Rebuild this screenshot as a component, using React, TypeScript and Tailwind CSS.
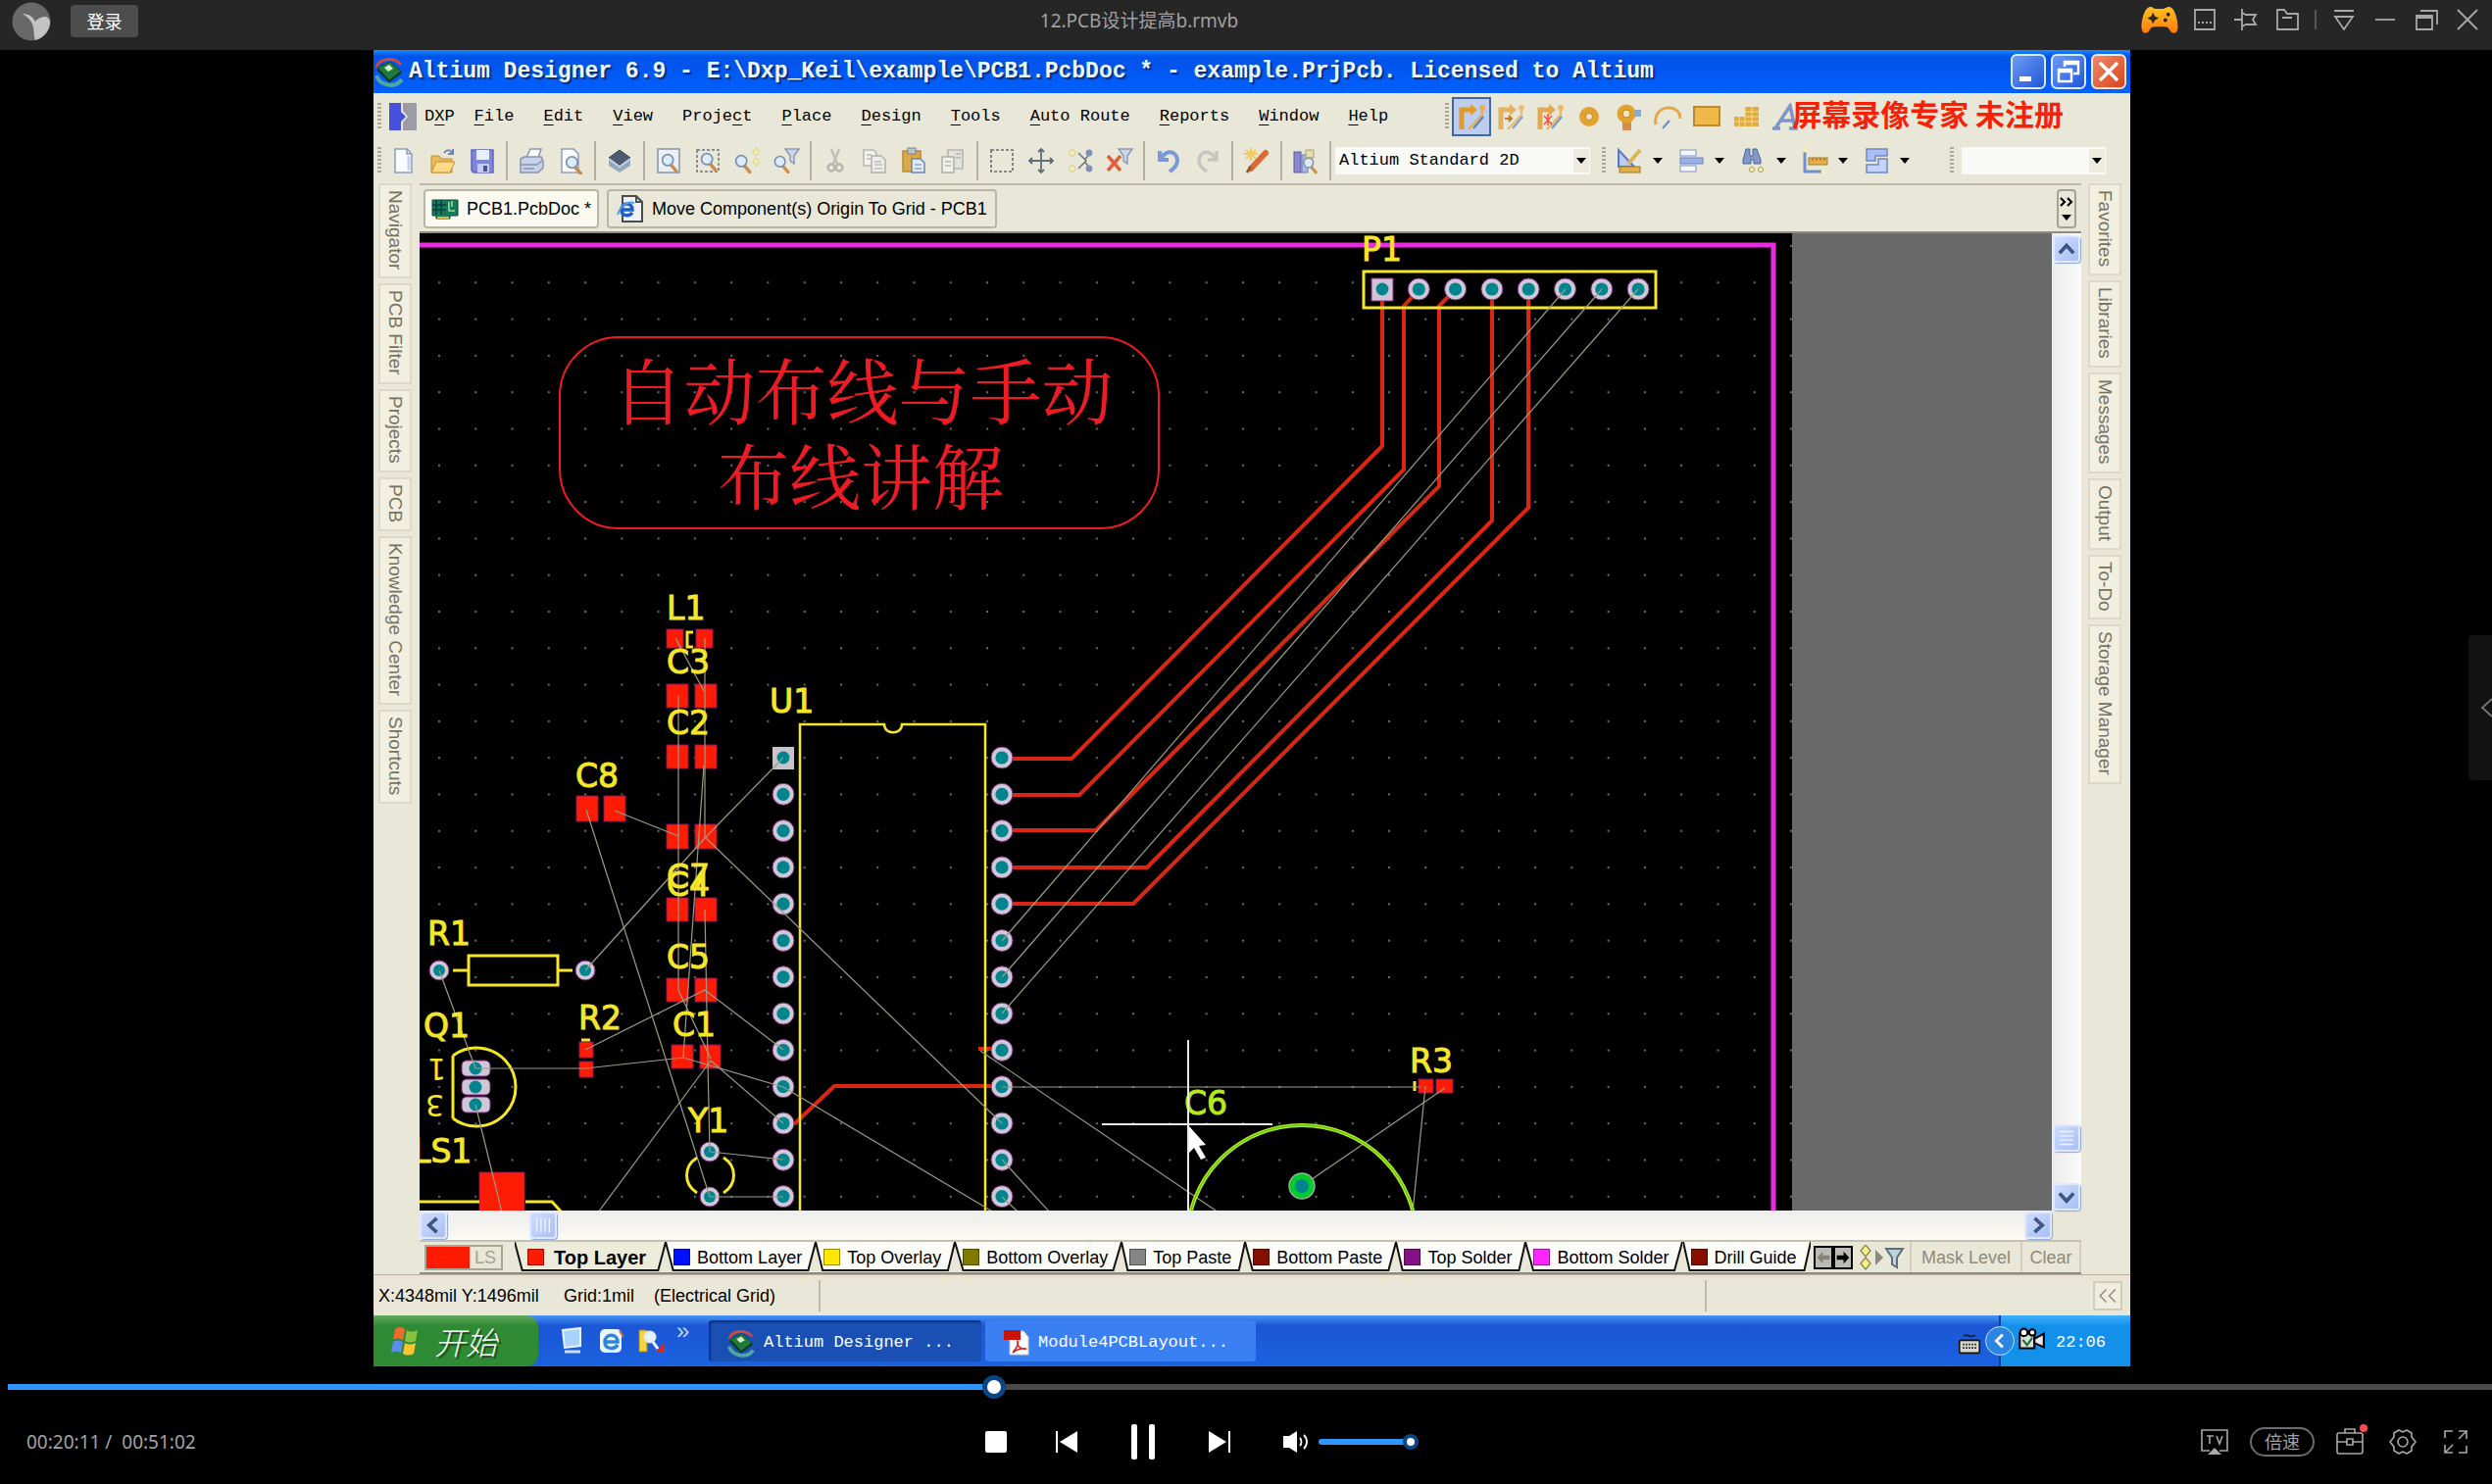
import type { ReactNode } from "react";

const menus: [string, number][] = [
  ["File", 0],
  ["Edit", 0],
  ["View", 0],
  ["Project", 5],
  ["Place", 0],
  ["Design", 0],
  ["Tools", 0],
  ["Auto Route", 0],
  ["Reports", 0],
  ["Window", 0],
  ["Help", 0],
];

const leftTabs = ["Navigator", "PCB Filter", "Projects", "PCB", "Knowledge Center", "Shortcuts"];
const rightTabs = ["Favorites", "Libraries", "Messages", "Output", "To-Do", "Storage Manager"];

const layers = [
  { name: "Top Layer", color: "#ff1a00", active: true },
  { name: "Bottom Layer", color: "#0010ff" },
  { name: "Top Overlay", color: "#ffe800" },
  { name: "Bottom Overlay", color: "#807b00" },
  { name: "Top Paste", color: "#858585" },
  { name: "Bottom Paste", color: "#851000" },
  { name: "Top Solder", color: "#851285" },
  { name: "Bottom Solder", color: "#ff25ff" },
  { name: "Drill Guide", color: "#851000" },
];

/* ---------- small drawings ---------- */

function Icon({ children, className = "size-7" }: { children: ReactNode; className?: string }) {
  return (
    <svg viewBox="0 0 28 28" className={className} fill="none" aria-hidden="true">
      {children}
    </svg>
  );
}

const page = <path d="M5 2h12l5 5v19H5z" fill="#fbfcff" stroke="#8f9db8" strokeWidth="1.5" />;

const lens = (
  <>
    <path d="M17 18l6 7" stroke="#c98d4a" strokeWidth="4" strokeLinecap="round" />
    <circle cx="13" cy="12" r="6.5" fill="#dcecfb" stroke="#7f92ad" strokeWidth="2" />
  </>
);

const newDoc = (
  <>
    {page}
    <path d="M17 2v5h5" stroke="#8f9db8" strokeWidth="1.5" />
    <path d="M19 9v15" stroke="#c3d2ee" strokeWidth="3" />
  </>
);

const openDoc = (
  <>
    <path d="M15 6c3-4 7-3 8 0m1-4v5h-5" stroke="#6c87b5" strokeWidth="2" />
    <path d="M2 9h8l2 3h11v14H2z" fill="#e9b95a" stroke="#c18f35" />
    <path d="M7 15h19l-5 11H2z" fill="#ffd987" stroke="#c18f35" />
  </>
);

const saveDoc = (
  <>
    <path d="M3 3h22v23H5l-2-2z" fill="#7f84dc" stroke="#6267bc" strokeWidth="1.5" />
    <rect x="8" y="3" width="13" height="10" fill="#e7efff" />
    <rect x="9" y="17" width="12" height="9" fill="#c5cdf0" />
    <rect x="15" y="19" width="4" height="6" fill="#4a509c" />
  </>
);

const printDoc = (
  <>
    <path d="M9 11l4-9h11l-3 9z" fill="#fff" stroke="#8795b0" strokeWidth="1.5" />
    <path d="M3 12l4-2h17l2 4v7l-5 5H3z" fill="#c6d3e8" stroke="#8794ab" strokeWidth="1.5" />
    <path d="M3 18h17l5-4M6 22h11" stroke="#8794ab" strokeWidth="1.5" />
  </>
);

const previewDoc = (
  <>
    {page}
    <g transform="translate(4 5) scale(.88)">{lens}</g>
  </>
);

const board = (
  <>
    <path d="M3 13v6l11 7 11-7v-6" fill="#93a7bf" />
    <path d="M14 3l11 8-11 8-11-8z" fill="#4f5b6e" stroke="#3a4553" />
    <path d="M3 12l11 8 11-8" stroke="#c3d3e6" strokeWidth="2" />
  </>
);

const zoomDoc = (
  <>
    <path d="M3 2h22v24H3z" fill="#e9f0f8" stroke="#8492a6" strokeWidth="1.5" />
    <g transform="translate(2 3) scale(.86)">{lens}</g>
  </>
);

const zoomArea = (
  <>
    <path d="M3 3h22v22H3z" stroke="#6a7280" strokeWidth="1.5" strokeDasharray="3 2" />
    <g transform="translate(2 2) scale(.86)">{lens}</g>
  </>
);

const zoomPoint = (
  <>
    <g transform="translate(-3 4) scale(.86)">{lens}</g>
    <path d="M23 1l4 4-4 4-3-4zM23 11l4 4-4 4-3-4z" fill="#f5f1a0" stroke="#d3cd88" />
  </>
);

const funnel = <path d="M13 2h14l-5 7v8l-4-3V9z" fill="#c9d7ea" stroke="#8d9bb1" strokeWidth="1.5" />;

const zoomFilter = (
  <>
    <g transform="translate(-3 5) scale(.82)">{lens}</g>
    {funnel}
  </>
);

const cut = (
  <>
    <path d="M10 2l6 15M18 2l-6 15" stroke="#c0c0b9" strokeWidth="2.5" />
    <circle cx="10" cy="21" r="3.5" stroke="#b6b6b0" strokeWidth="2.5" />
    <circle cx="18" cy="21" r="3.5" stroke="#b6b6b0" strokeWidth="2.5" />
  </>
);

const copy = (
  <>
    <path d="M3 3h10l3 3v13H3z" fill="#f3f3ef" stroke="#b6b6b0" strokeWidth="1.5" />
    <path d="M11 9h10l4 4v13H11z" fill="#ececea" stroke="#b0b0aa" strokeWidth="1.5" />
    <path d="M6 8h5M6 12h4M14 15h7M14 18h8M14 22h8" stroke="#bdbdb8" strokeWidth="1.3" />
  </>
);

const paste = (
  <>
    <rect x="3" y="4" width="18" height="21" fill="#dba94a" stroke="#b58a3a" strokeWidth="1.5" />
    <rect x="8" y="1" width="8" height="6" fill="#bfc5cf" stroke="#7a7f88" />
    <path d="M12 12h9l4 4v10H12z" fill="#dfe9fa" stroke="#7085ad" strokeWidth="1.5" />
    <path d="M15 18h7M15 22h7" stroke="#7085ad" />
  </>
);

const rubber = (
  <>
    <path d="M9 3h15v19H9z" fill="#e3e3de" stroke="#b4b4ae" strokeWidth="1.5" />
    <path d="M3 10h12v16H3z" fill="#f0f0ec" stroke="#b0b0aa" strokeWidth="1.5" />
    <path d="M17 7h5M17 11h5M6 15h6M6 19h6" stroke="#b5b5b0" strokeWidth="1.5" />
  </>
);

const selectArea = <path d="M3 3h22v22H3z" stroke="#666b72" strokeWidth="1.6" strokeDasharray="3 2" />;

const move = (
  <path
    d="M14 3v22M3 14h22M11 5l3-3 3 3M11 23l3 3 3-3M5 11l-3 3 3 3M23 11l3 3-3 3"
    stroke="#5f6b7b"
    strokeWidth="1.8"
  />
);

const deselect = (
  <>
    <path d="M12 6l8 8-8 8M22 9l-4 4M22 19l-4-4" stroke="#6c7480" strokeWidth="1.6" />
    <circle cx="6" cy="6" r="3.2" fill="#f2eeb0" stroke="#d3cd94" />
    <circle cx="6" cy="22" r="3.2" fill="#f2eeb0" stroke="#d3cd94" />
    <circle cx="23" cy="6" r="3.4" fill="#7c93b5" />
    <circle cx="23" cy="22" r="3.4" fill="#7c93b5" />
  </>
);

const clearFilter = (
  <>
    {funnel}
    <path d="M2 9l13 15M15 9L2 24" stroke="#e2603f" strokeWidth="3.5" />
  </>
);

const undo = <path d="M5 4v9h9M6 12c4-7 11-9 15-4s2 12-6 17" stroke="#7b98d8" strokeWidth="4" />;
const redo = <path d="M23 4v9h-9M22 12c-4-7-11-9-15-4s-2 12 6 17" stroke="#c6c6c0" strokeWidth="3.5" />;

const wand = (
  <>
    <path d="M8 1v13M1 7h14M3 3l10 9M13 3L3 12" stroke="#f0cc5c" strokeWidth="2" />
    <path d="M23 6L8 22" stroke="#dc6a35" strokeWidth="6" strokeLinecap="round" />
    <path d="M8 20l-4 6" stroke="#8c5a3a" strokeWidth="3" />
  </>
);

const browse = (
  <>
    <rect x="2" y="5" width="7" height="21" fill="#8a86cf" stroke="#5d5aa0" />
    <rect x="10" y="8" width="6" height="18" fill="#a9b9e6" stroke="#6d7db0" />
    <path d="M14 3h8v8h-8z" fill="#e6dcb0" stroke="#a89c6c" />
    <g transform="translate(7 7) scale(.75)">{lens}</g>
  </>
);

const drafting = (
  <>
    <path d="M3 3v17h16z" fill="#b9cbf5" stroke="#5877c0" strokeWidth="2" />
    <path d="M25 3L13 17" stroke="#d8b75a" strokeWidth="4" />
    <rect x="4" y="20" width="21" height="6" fill="#e2b04a" stroke="#9c7425" />
  </>
);

const alignIcon = (
  <>
    <rect x="3" y="3" width="16" height="6" fill="#f4f7ff" stroke="#8094c4" />
    <rect x="3" y="11" width="23" height="6" fill="#9ab0ea" stroke="#6b82bd" />
    <rect x="3" y="19" width="16" height="6" fill="#f4f7ff" stroke="#8094c4" />
  </>
);

const find = (
  <>
    <path d="M7 2h4v7h3V2h4l4 11v4h-7v-4h-3v4H4v-4z" fill="#8298c8" stroke="#4f6596" />
    <circle cx="13" cy="23" r="2.6" fill="#f2eeb0" stroke="#aaa35e" />
    <circle cx="22" cy="23" r="2.6" fill="#f2eeb0" stroke="#aaa35e" />
  </>
);

const dimension = (
  <>
    <path d="M4 5v20h20" stroke="#7390cf" strokeWidth="3" />
    <rect x="8" y="11" width="19" height="7" fill="#e6ad48" stroke="#a87a28" />
    <path d="M12 11v3M16 11v3M20 11v3M24 11v3" stroke="#8d6420" />
    <circle cx="5" cy="3" r="2.4" fill="#f5f1a8" />
    <circle cx="23" cy="25" r="2.4" fill="#f5f1a8" />
  </>
);

const room = (
  <>
    <path d="M4 2h21v7H13v5H4z" fill="#a9bff2" stroke="#6e88c5" strokeWidth="1.5" />
    <path d="M25 12v14H4v-8h12v-6z" fill="#c5d5fa" stroke="#6e88c5" strokeWidth="1.5" />
  </>
);

const toolGroups: [string, ReactNode][][] = [
  [["New", newDoc], ["Open", openDoc], ["Save", saveDoc]],
  [["Print", printDoc], ["Preview", previewDoc]],
  [["Layer sets", board]],
  [["Fit document", zoomDoc], ["Zoom area", zoomArea], ["Zoom selected", zoomPoint], ["Zoom filtered", zoomFilter]],
  [["Cut", cut], ["Copy", copy], ["Paste", paste], ["Rubber stamp", rubber]],
  [["Select area", selectArea], ["Move", move], ["Deselect", deselect], ["Clear filter", clearFilter]],
  [["Undo", undo], ["Redo", redo]],
  [["Cross probe", wand]],
  [["Browse", browse]],
];

const dropTools: [string, ReactNode][] = [
  ["Utilities", drafting],
  ["Align", alignIcon],
  ["Find", find],
  ["Dimension", dimension],
  ["Rooms", room],
];

const route = (
  <>
    <path d="M4 27V7h11" stroke="#e09a30" strokeWidth="5" />
    <path d="M13 1l7 6-7 6z" fill="#e09a30" />
    <circle cx="25" cy="5" r="3" fill="#e8b050" />
    <path d="M25 4v8L11 27" stroke="#e8b050" strokeWidth="2.5" />
    <path d="M26 14L16 26" stroke="#5b7fc0" strokeWidth="2" />
  </>
);

const placeTools: [string, ReactNode][] = [
  ["Route", route],
  [
    "Route pair",
    <>
      <g opacity=".7">{route}</g>
      <path d="M8 16h7m-3-3l3 3-3 3" stroke="#c07a28" strokeWidth="2" />
    </>,
  ],
  [
    "Route multiple",
    <>
      <g opacity=".8">{route}</g>
      <path d="M8 13l8 9M16 13l-8 9M12 11v12" stroke="#ee5a40" strokeWidth="1.6" />
    </>,
  ],
  [
    "Pad",
    <>
      <circle cx="14" cy="14" r="10" fill="#e3a230" />
      <circle cx="14" cy="14" r="3.5" fill="#f8eac0" stroke="#b9842a" />
    </>,
  ],
  [
    "Via",
    <>
      <path d="M15 7h12v7H15z" fill="#7fb0d8" />
      <path d="M8 18h9v10H8z" fill="#d88c4a" />
      <circle cx="12" cy="11" r="9.5" fill="#e3a230" />
      <circle cx="12" cy="11" r="4" fill="#f6e3b4" stroke="#b9842a" />
    </>,
  ],
  [
    "Arc",
    <>
      <path d="M2 22C-2 2 27-1 27 16" stroke="#e2a848" strokeWidth="3" />
      <path d="M9 26l7-8" stroke="#6c8cc4" strokeWidth="2" />
    </>,
  ],
  ["Fill", <rect x="1" y="4" width="26" height="19" fill="#f0b848" stroke="#b98a3c" strokeWidth="2" />],
  [
    "Polygon",
    <>
      <path d="M13 4h14v20H2V14h11z" fill="#e2ab3d" />
      <path d="M2 19h25M13 9h14M13 14h14M7 14v10M13 4v20M20 4v20" stroke="#f7dc98" />
    </>,
  ],
];

function Altium({ className = "size-8" }: { className?: string }) {
  return (
    <svg viewBox="0 0 32 32" className={className} fill="none" aria-hidden="true">
      <path d="M3 12C5 3 20 0 28 9" stroke="#c94a45" strokeWidth="3" />
      <path d="M3 20c3 10 19 14 26 4" stroke="#4fa8a0" strokeWidth="4" />
      <path d="M4 12l13-6 11 10-12 9z" fill="#1f7a3c" stroke="#0c4a22" />
      <path d="M11 12l5-3 4 4-5 3z" fill="#d6efc5" />
      <path d="M4 14l12 12 12-9" stroke="#0a3a1c" strokeWidth="2" />
    </svg>
  );
}

function Caret() {
  return (
    <svg viewBox="0 0 10 6" className="h-[6px] w-[10px]" aria-hidden="true">
      <path d="M0 0h10L5 6z" fill="#000" />
    </svg>
  );
}

function Grip() {
  return <span className="h-7 w-1 shrink-0 bg-[repeating-linear-gradient(#aaa799_0_2px,transparent_2px_4px)]" />;
}

/* ---------- PCB canvas ---------- */

const pitch = 37.3;
const rows = Array.from({ length: 13 }, (_, i) => 773 + i * pitch);
const cols = Array.from({ length: 8 }, (_, i) => 1410 + i * pitch);

const traces = [
  "M1410 300V455L1093 774H1022",
  "M1447 296L1432 312V479L1101 811H1022",
  "M1484 296L1468 312V496L1118 847H1022",
  "M1522 300V531L1170 885H1022",
  "M1559 300V518L1156 922H1022",
  "M799 1146H811L851 1108H1022",
  "M998 1070H1022",
];

const rats = [
  "M1597 295L1022 960",
  "M1634 295L1022 997",
  "M1671 295L1022 1034",
  "M689 651L718 705",
  "M719 651V854",
  "M692 710V1010L725 1080",
  "M718 781L697 1078",
  "M719 928L722 1084 724 1175",
  "M799 773L719 855 597 990",
  "M719 854L1022 1146",
  "M598 826L724 1221",
  "M627 827L692 853",
  "M448 990L485 1090H597L697 1079 799 1109",
  "M597 1071L719 1010 799 1071",
  "M725 1082L799 1146",
  "M725 1082L610 1237",
  "M799 1109L1014 1237",
  "M724 1175L799 1183",
  "M724 1221H799",
  "M485 1127L512 1237",
  "M1000 1072L1243 1237",
  "M1022 1109H1449",
  "M1022 1183L1071 1237",
  "M1022 1221L1039 1237",
  "M1454 1108L1441 1237",
  "M1474 1110L1328 1210",
];

const smds = [
  [680, 642, 17, 19],
  [710, 642, 17, 19],
  [680, 698, 22, 24],
  [709, 698, 22, 24],
  [680, 760, 22, 24],
  [709, 760, 22, 24],
  [680, 841, 22, 25],
  [709, 841, 22, 25],
  [680, 916, 22, 24],
  [709, 916, 22, 24],
  [680, 998, 22, 24],
  [709, 998, 22, 24],
  [685, 1066, 22, 24],
  [714, 1066, 21, 24],
  [588, 812, 22, 26],
  [616, 812, 22, 26],
  [591, 1063, 14, 16],
  [591, 1083, 14, 16],
  [489, 1196, 46, 42],
  [1447, 1101, 15, 14],
  [1465, 1101, 17, 14],
];

const labels: [string, number, number][] = [
  ["P1", 1389, 266],
  ["L1", 680, 632],
  ["C3", 680, 687],
  ["C2", 680, 749],
  ["U1", 785, 727],
  ["C8", 587, 803],
  ["C7", 680, 906],
  ["C4", 680, 914],
  ["C5", 680, 988],
  ["C1", 686, 1057],
  ["R1", 436, 964],
  ["R2", 590, 1050],
  ["Q1", 432, 1058],
  ["LS1", 421, 1186],
  ["Y1", 702, 1155],
  ["R3", 1438, 1094],
];

function Pad({ x, y, r = 11 }: { x: number; y: number; r?: number }) {
  return (
    <>
      <circle cx={x} cy={y} r={r} fill="#cfc9d6" stroke="#7a2a86" strokeWidth="1" />
      <circle cx={x} cy={y} r={r * 0.6} fill="#00858f" />
    </>
  );
}

function Board() {
  return (
    <svg
      viewBox="428 238 1665 998"
      preserveAspectRatio="xMinYMin slice"
      className="block h-full min-w-0 flex-1 bg-[#696969]"
      role="img"
      aria-label="PCB1.PcbDoc"
    >
      <defs>
        <pattern id="grid" x="447" y="250" width="37.27" height="37.3" patternUnits="userSpaceOnUse">
          <rect width="2" height="2" fill="#6c6c6c" />
        </pattern>
      </defs>
      <rect x="428" y="238" width="1400" height="1000" fill="#000" />
      <rect x="428" y="238" width="1400" height="1000" fill="url(#grid)" />
      <path d="M420 250H1809V1240" fill="none" stroke="#ec2ae0" strokeWidth="5" />

      <g fill="#ff1c04" stroke="#8c1460" strokeWidth="1">
        {smds.map(([x, y, w, h], i) => (
          <rect key={i} x={x} y={y} width={w} height={h} />
        ))}
      </g>

      <g fill="none" stroke="#dc2614" strokeWidth="4" strokeLinejoin="round">
        {traces.map((d) => (
          <path key={d} d={d} />
        ))}
      </g>

      {/* component outlines */}
      <g fill="none" stroke="#f5e62a" strokeWidth="3">
        <rect x="1391" y="277" width="298" height="37" />
        <path d="M816 1240V739H902C902 750 920 750 920 739H1005V1240" strokeWidth="2.5" />
        <rect x="478" y="975" width="91" height="30" />
        <path d="M462 990H478M569 990H584" />
        <path d="M462 1077V1141M462 1077A40 40 0 1 1 462 1141" />
        <path d="M711 1181C697 1190 697 1208 711 1217M738 1181C752 1190 752 1208 738 1217" />
        <path d="M428 1226H489M536 1226H563L574 1238" />
        <path d="M707 645H701V660H707" />
        <path d="M593 1061H602M1443 1103V1113" />
      </g>

      {rows.map((y, i) => (
        <g key={y}>
          {i === 0 ? (
            <>
              <rect x="788" y="762" width="22" height="23" fill="#c6c3cc" />
              <circle cx="799" cy="773" r="6.4" fill="#00858f" />
            </>
          ) : (
            <Pad x={799} y={y} />
          )}
          <Pad x={1022} y={y} />
        </g>
      ))}
      <rect x="1399" y="284" width="22" height="23" fill="#d0c4d4" stroke="#8a2a90" />
      <circle cx="1410" cy="295" r="6.4" fill="#00858f" />
      {cols.slice(1).map((x) => (
        <Pad key={x} x={x} y={295} />
      ))}
      <Pad x={448} y={990} r={10} />
      <Pad x={597} y={990} r={10} />
      <Pad x={724} y={1175} r={10} />
      <Pad x={724} y={1221} r={10} />
      {[1090, 1109, 1127].map((y) => (
        <g key={y}>
          <rect x="471" y={y - 8} width="29" height="16" rx="5" fill="#cfc6d6" stroke="#8a2a90" />
          <circle cx="485" cy={y} r="6.5" fill="#00858f" />
        </g>
      ))}

      <g fill="none" stroke="#9c9c84" strokeWidth="1.2">
        {rats.map((d) => (
          <path key={d} d={d} />
        ))}
      </g>

      <g fill="#f5e62a" stroke="#f5e62a" strokeWidth="1" fontFamily="'DejaVu Sans', sans-serif" fontSize="33">
        {labels.map(([text, x, y]) => (
          <text key={text} x={x} y={y}>
            {text}
          </text>
        ))}
        <g fontSize="30" strokeWidth="0">
          <text x="-455" y="-1080" transform="rotate(180)">
            1
          </text>
          <text x="-453" y="-1117" transform="rotate(180)">
            3
          </text>
        </g>
        <text x="1208" y="1137" fill="#b6e81c" stroke="#b6e81c">
          C6
        </text>
      </g>

      <circle cx="1328" cy="1265" r="117" fill="none" stroke="#b8e824" strokeWidth="4" />
      <circle cx="1328" cy="1265" r="117" fill="none" stroke="#5ccc14" strokeWidth="1.4" />
      <circle cx="1328" cy="1210" r="13" fill="#00cc2c" stroke="#9fb09f" strokeWidth="1.4" />
      <circle cx="1328" cy="1210" r="7" fill="#00858f" />

      {/* crosshair and pointer */}
      <path d="M1212 1061V1237M1124 1147H1298" stroke="#e8e8e8" strokeWidth="2" />
      <path d="M1213 1149V1176L1218 1171 1225 1183 1230 1181 1223 1169 1230 1168Z" fill="#fff" />

      <rect x="571" y="344" width="611" height="195" rx="60" fill="none" stroke="#ed1c24" strokeWidth="2" />
      <g
        fill="#ed1c24"
        fontFamily="'FangSong', 'Noto Serif CJK SC', 'Noto Sans CJK SC', serif"
        fontSize="73"
        textAnchor="middle"
      >
        <text x="880" y="427">
          自动布线与手动
        </text>
        <text x="878" y="514">
          布线讲解
        </text>
      </g>
    </svg>
  );
}

/* ---------- editor window ---------- */

function TitleBar() {
  const box =
    "flex size-9 items-center justify-center rounded-md border-2 border-[#dfeaff] bg-linear-to-br from-[#6d9bf5] to-[#1f55d8]";
  return (
    <div className="flex h-11 shrink-0 items-center bg-linear-to-b from-[#1e8bff] via-[#0352e8] via-15% to-[#0060ff] pr-1">
      <Altium className="size-8" />
      <h1 className="ml-1 min-w-0 flex-1 overflow-hidden font-['Liberation_Mono',monospace] text-[23px] font-bold whitespace-nowrap text-[#eefaff] [text-shadow:2px_2px_1px_#0a2d80]">
        Altium Designer 6.9 - E:\Dxp_Keil\example\PCB1.PcbDoc * - example.PrjPcb. Licensed to Altium
      </h1>
      <div className="flex gap-[5px]">
        <button aria-label="Minimize window" className={box}>
          <Icon>
            <path d="M5 19h12v5H5z" fill="#fff" />
          </Icon>
        </button>
        <button aria-label="Restore window" className={box}>
          <Icon>
            <path d="M10 9V4h14v12h-5M10 6h14" stroke="#fff" strokeWidth="2.5" />
            <path d="M4 12h13v12H4zM4 14h13" stroke="#fff" strokeWidth="2.5" />
          </Icon>
        </button>
        <button
          aria-label="Close window"
          className="flex size-9 items-center justify-center rounded-md border-2 border-[#ffe6dc] bg-linear-to-br from-[#ee8a68] to-[#d8400f]"
        >
          <Icon>
            <path d="M5 5l18 18M23 5L5 23" stroke="#fff" strokeWidth="3.5" />
          </Icon>
        </button>
      </div>
    </div>
  );
}

function MenuBar() {
  return (
    <div className="relative flex h-[45px] shrink-0 items-center pt-[2px] pl-1 font-['Liberation_Mono',monospace] text-[17px]">
      <Grip />
      <svg viewBox="0 0 28 28" className="ml-2 h-7 w-7" aria-hidden="true">
        <path d="M0 0h12v9l5 5-5 5v9H0z" fill="#4550dc" />
        <path d="M14 0h14v28H14v-8l5-6-5-6z" fill="#9c9ca4" />
      </svg>
      <button className="ml-2">
        D<u className="underline-offset-4">X</u>P
      </button>
      <nav className="ml-5 flex gap-[30px]">
        {menus.map(([name, at]) => (
          <button key={name} className="whitespace-pre">
            {name.slice(0, at)}
            <u className="underline-offset-4">{name[at]}</u>
            {name.slice(at + 1)}
          </button>
        ))}
      </nav>
      <div className="ml-[58px] flex items-center">
        <Grip />
        {placeTools.map(([name, icon], i) => (
          <button
            key={name}
            aria-label={name}
            className={
              i === 0
                ? "ml-[3px] flex h-10 w-10 items-center justify-center border-2 border-[#3f67ae] bg-[#bccdee]"
                : "flex h-10 w-10 items-center justify-center"
            }
          >
            <Icon>{icon}</Icon>
          </button>
        ))}
        <button aria-label="Place string" className="flex h-10 w-10 items-center justify-center">
          <Icon>
            <path d="M1 26h8M4 26L19 3l5 23M9 18h12M18 26h9" stroke="#7f96c4" strokeWidth="3.5" />
          </Icon>
        </button>
      </div>
      <p className="absolute top-0 right-[68px] font-['Noto_Sans_CJK_SC',sans-serif] text-[30px] leading-[40px] font-bold whitespace-pre text-[#f52208]">
        屏幕录像专家 未注册
      </p>
    </div>
  );
}

function ToolBar() {
  return (
    <div className="flex h-[47px] shrink-0 items-center pl-1">
      <Grip />
      <div className="ml-[3px] flex items-center">
        {toolGroups.map((group, i) => (
          <div key={i} className="flex items-center">
            {group.map(([name, icon]) => (
              <button key={name} aria-label={name} className="flex h-10 w-10 items-center justify-center">
                <Icon>{icon}</Icon>
              </button>
            ))}
            <span className="mx-1 h-10 w-[2px] bg-[#b5b2a2]" />
          </div>
        ))}
      </div>
      <div className="relative w-[260px]">
        <select
          aria-label="View configuration"
          className="h-7 w-full appearance-none bg-[#f9f9f7] pl-1 font-['Liberation_Mono',monospace] text-[17px]"
        >
          <option>Altium Standard 2D</option>
        </select>
        <span className="pointer-events-none absolute inset-y-[2px] right-[1px] flex w-4 items-center justify-center bg-[#ecebdd]">
          <Caret />
        </span>
      </div>
      <span className="ml-3 flex items-center">
        <Grip />
      </span>
      <div className="ml-1 flex">
        {dropTools.map(([name, icon]) => (
          <button key={name} aria-label={name} className="flex h-10 w-[63px] items-center gap-[10px] pl-[6px]">
            <Icon>{icon}</Icon>
            <Caret />
          </button>
        ))}
      </div>
      <span className="ml-8 flex">
        <Grip />
      </span>
      <div className="relative mr-[25px] ml-2 min-w-0 flex-1">
        <select aria-label="Filter" className="h-7 w-full appearance-none bg-[#f9f9f7]" />
        <span className="pointer-events-none absolute inset-y-[2px] right-[1px] flex w-4 items-center justify-center bg-[#ecebdd]">
          <Caret />
        </span>
      </div>
    </div>
  );
}

function SideTabs({ tabs, className }: { tabs: string[]; className: string }) {
  return (
    <div className={`flex shrink-0 flex-col gap-[5px] ${className}`}>
      {tabs.map((tab) => (
        <button
          key={tab}
          className="flex w-[34px] items-center justify-center border-2 border-[#dcd9c8] bg-[#f1efe0] pt-[5px] pb-[7px] text-[19px] leading-6 text-[#77725f] [writing-mode:vertical-rl]"
        >
          {tab}
        </button>
      ))}
    </div>
  );
}

function ScrollButton({ label, d, thumb = false }: { label: string; d: string; thumb?: boolean }) {
  return (
    <button
      aria-label={label}
      className="flex size-7 shrink-0 items-center justify-center rounded-sm border-2 border-[#dfe8fd] bg-linear-to-br from-[#cfdcff] to-[#a9c0f5] shadow-[1px_1px_1px_#8ba6d8]"
    >
      <Icon className="size-5">
        <path d={d} stroke={thumb ? "#eef3ff" : "#3d567f"} strokeWidth={thumb ? 2 : 5} />
      </Icon>
    </button>
  );
}

function LayerTabs() {
  return (
    <div className="flex h-[35px] shrink-0 items-center border-t-2 border-b-2 border-t-[#c4c1b0] border-b-[#8f8c7e] text-lg leading-6">
      <button className="ml-[5px] flex h-[26px] w-20 items-center border-2 border-[#aaa797] text-[#a5a292]">
        <span className="h-full w-11 bg-[#ff1a00]" />
        <span className="flex-1 text-center">LS</span>
      </button>
      <div className="ml-3 flex h-full min-w-0 flex-1 overflow-hidden">
        {layers.map(({ name, color, active }) => (
          <button
            key={name}
            className={
              active
                ? "relative flex h-full shrink-0 items-center gap-[10px] pr-5 pl-[13px] text-xl font-bold"
                : "relative flex h-full shrink-0 items-center gap-[7px] pr-[14px] pl-2"
            }
          >
            <svg viewBox="0 0 100 32" preserveAspectRatio="none" className="absolute inset-0 h-full w-full" aria-hidden="true">
              <path
                d="M0 0L5 30H95L100 0"
                fill={active ? "#ecebdc" : "#fbfbf8"}
                stroke="#111"
                strokeWidth="2"
                vectorEffect="non-scaling-stroke"
              />
            </svg>
            <span className="relative size-[17px] border border-black/40" style={{ backgroundColor: color }} />
            <span className="relative whitespace-nowrap">{name}</span>
          </button>
        ))}
      </div>
      <div className="flex w-10 shrink-0">
        {["Scroll tabs left", "Scroll tabs right"].map((label, i) => (
          <button key={label} aria-label={label} className="flex h-6 w-5 items-center justify-center border-2 border-black bg-[#bdbcb4]">
            <Icon className="size-4">
              {i === 0 ? (
                <path d="M13 3L3 14l10 11v-7h12v-8H13z" fill="#85847c" />
              ) : (
                <path d="M15 3l10 11-10 11v-7H3v-8h12z" fill="#000" />
              )}
            </Icon>
          </button>
        ))}
      </div>
      <button aria-label="Mask filter" className="flex h-full w-[60px] shrink-0 items-center justify-center border-r-2 border-[#d2cfbe]">
        <svg viewBox="0 0 50 26" className="h-[26px] w-[50px]" aria-hidden="true">
          <path d="M9 0l5 6-5 6-5-6zM9 13l5 6-5 6-5-6z" fill="#f8f28c" stroke="#8c874a" strokeWidth="1.3" />
          <path d="M19 5l8 8-8 8z" fill="#8d8a80" />
          <path d="M30 4h17l-6 9v10l-5-3v-7z" fill="#bcd2dc" stroke="#5d6f78" strokeWidth="2" />
        </svg>
      </button>
      <button className="h-full w-[113px] shrink-0 border-r-2 border-[#d2cfbe] text-[#8e8a7c]">Mask Level</button>
      <button className="h-full w-[60px] shrink-0 border-r-2 border-[#d2cfbe] text-[#8e8a7c]">Clear</button>
    </div>
  );
}

function Workspace() {
  return (
    <div className="flex min-h-0 flex-1">
      <SideTabs tabs={leftTabs} className="w-[47px] pl-[5px]" />
      <div className="flex min-w-0 flex-1 flex-col">
        <div className="flex h-[51px] shrink-0 items-center border-t-2 border-b-2 border-t-[#bdbaab] border-b-[#8f8c7e] pl-1 text-lg">
          <button className="flex h-10 items-center gap-2 rounded-sm border-2 border-[#b9b6a7] bg-[#fbfaf0] px-[6px]">
            <svg viewBox="0 0 28 22" className="h-[22px] w-7" aria-hidden="true">
              <path d="M1 2h26v16h-8v3H5v-3H1z" fill="#167a56" stroke="#0b4a3a" />
              <path d="M5 2v15M10 2v15M1 7h14M1 12h14" stroke="#0a3e44" strokeWidth="1.6" />
              <path d="M18 4v9h6M21 3v6" stroke="#8fe0a4" strokeWidth="1.6" fill="none" />
              <path d="M6 20h12" stroke="#d8b742" strokeWidth="2" />
            </svg>
            PCB1.PcbDoc *
          </button>
          <button className="ml-2 flex h-10 items-center gap-2 rounded-sm border-2 border-[#b9b6a7] px-2">
            <Icon className="size-[28px]">
              <path d="M6 1h14l6 6v20H6z" fill="#eef1f5" stroke="#4c4c4c" strokeWidth="2" />
              <path d="M20 1v6h6" stroke="#4c4c4c" strokeWidth="2" />
              <path d="M4 15h12c0-8-11-8-11 0 0 7 8 7 11 3" stroke="#1d5fc4" strokeWidth="3.5" />
              <path d="M1 20C4 10 12 6 18 8" stroke="#5a9be8" strokeWidth="2" />
            </Icon>
            Move Component(s) Origin To Grid - PCB1
          </button>
          <button
            aria-label="More documents"
            className="mr-[5px] ml-auto flex h-10 w-5 flex-col items-center justify-center gap-2 rounded-sm border-2 border-[#a5a293]"
          >
            <svg viewBox="0 0 14 10" className="h-[10px] w-[14px]" fill="none" aria-hidden="true">
              <path d="M1 1l4 4-4 4M8 1l4 4-4 4" stroke="#000" strokeWidth="2.2" />
            </svg>
            <Caret />
          </button>
        </div>
        <div className="flex min-h-0 flex-1">
          <Board />
          <div className="flex w-[30px] shrink-0 flex-col items-center bg-linear-to-r from-[#ececec] to-[#fafafa] pt-[2px]">
            <ScrollButton label="Scroll up" d="M4 20l10-11 10 11" />
            <div className="flex-1" />
            <ScrollButton thumb label="Vertical thumb" d="M4 5h20M4 11h20M4 17h20M4 23h20" />
            <div className="h-8" />
            <ScrollButton label="Scroll down" d="M4 9l10 11L24 9" />
          </div>
        </div>
        <div className="mr-[30px] flex h-[30px] shrink-0 items-center bg-linear-to-b from-[#ededed] to-[#fbfaf4]">
          <ScrollButton label="Scroll left" d="M19 4L8 14l11 10" />
          <div className="w-[84px]" />
          <ScrollButton thumb label="Horizontal thumb" d="M5 4v20M11 4v20M17 4v20M23 4v20" />
          <div className="flex-1" />
          <ScrollButton label="Scroll right" d="M9 4l11 10L9 24" />
        </div>
        <LayerTabs />
      </div>
      <SideTabs tabs={rightTabs} className="w-[50px] pl-[7px]" />
    </div>
  );
}

function StatusBar() {
  return (
    <div className="flex h-[42px] shrink-0 items-center border-t border-[#b4b1a2] bg-linear-to-b from-[#ece2d4] to-[#e9e8d8] to-30% pl-[5px] text-lg">
      <span className="w-[189px] whitespace-nowrap">X:4348mil Y:1496mil</span>
      <span className="w-[92px]">Grid:1mil</span>
      <span className="w-[168px]">(Electrical Grid)</span>
      <span className="h-8 w-[2px] bg-[#bebbaa]" />
      <span className="mr-[394px] ml-auto h-8 w-[2px] bg-[#bebbaa]" />
      <button
        aria-label="Hide panels"
        className="mr-2 flex h-[30px] w-[30px] items-center justify-center border-2 border-[#cfccba] bg-[#efeddd]"
      >
        <Icon className="size-5">
          <path d="M12 5L3 14l9 9M25 5l-9 9 9 9" stroke="#8e8a7c" strokeWidth="2" />
        </Icon>
      </button>
    </div>
  );
}

function TaskBar() {
  return (
    <div className="flex h-[52px] shrink-0 items-center bg-linear-to-b from-[#4a95f5] via-[#1b56d6] via-20% to-[#1a62e0]">
      <button className="flex h-full w-[168px] items-center gap-3 rounded-r-xl bg-linear-to-b from-[#62ab5e] via-[#2f8a34] via-20% to-[#2f8a34] pl-4 font-['Noto_Sans_CJK_SC',sans-serif] text-[32px] leading-9 font-light text-white italic [text-shadow:2px_2px_1px_#164a18]">
        <svg viewBox="0 0 34 32" className="h-8 w-[34px]" aria-hidden="true">
          <path d="M6 4c4-3 7-2 10 0l-2 11c-3-2-6-2-10 0z" fill="#f06a2c" />
          <path d="M18 5c4 2 7 2 11 0l-2 11c-4 2-7 2-11 0z" fill="#86c440" />
          <path d="M4 17c4-2 7-2 10 0l-2 11c-3-2-6-2-10 0z" fill="#5b8cf0" />
          <path d="M16 18c4 2 7 2 11 0l-2 11c-4 2-7 2-11 0z" fill="#fac42c" />
        </svg>
        开始
      </button>
      <div className="flex items-center gap-2 pl-[21px]">
        <button aria-label="Desktop" className="w-8">
          <Icon>
            <path d="M4 3l18-2v18L6 21z" fill="#a9d3fb" stroke="#e9f4ff" strokeWidth="2" />
            <path d="M6 25h16" stroke="#cfd9e8" strokeWidth="3" />
          </Icon>
        </button>
        <button aria-label="Browser" className="w-8">
          <Icon>
            <rect x="2" y="2" width="22" height="24" rx="5" fill="#e8f6ff" />
            <path d="M8 15h12c0-9-13-9-13 0 0 8 10 8 13 3" stroke="#2f86d8" strokeWidth="3.5" />
            <path d="M22 4l4 6" stroke="#d86a3a" strokeWidth="2" />
          </Icon>
        </button>
        <button aria-label="Viewer" className="w-8">
          <Icon>
            <path d="M2 3h8v22H2z" fill="#f4d43c" stroke="#a3821a" />
            <path d="M6 26h12l10-11v11z" fill="#d82a1e" />
            <circle cx="13" cy="10" r="5.5" fill="#dff0ff" stroke="#e9e9e9" strokeWidth="2" />
            <path d="M16 15l5 7" stroke="#fff" strokeWidth="3" />
          </Icon>
        </button>
      </div>
      <span className="mb-5 w-[41px] pl-2 text-2xl leading-6 text-[#bcd6ff]">»</span>
      <div className="flex gap-1 font-['Liberation_Mono',monospace] text-[17px] text-white">
        <button className="flex h-[42px] w-[278px] items-center gap-2 rounded-sm bg-[#1a4fb4] pt-1 pl-[18px] shadow-[inset_2px_2px_2px_#0d3283]">
          <Altium className="size-[30px]" />
          Altium Designer ...
        </button>
        <button className="flex h-[42px] w-[276px] items-center gap-2 rounded-sm bg-[#3b80f2] pt-1 pl-[18px]">
          <Icon className="size-[28px]">
            <path d="M7 2h14l5 6v18H7z" fill="#fff" stroke="#c9c9c9" />
            <path d="M1 1h17v10H1z" fill="#c8140f" />
            <path d="M10 24c5-6 6-10 5-12-1 6 4 9 9 8-6-1-10 1-14 4z" stroke="#d8241c" strokeWidth="1.6" />
          </Icon>
          Module4PCBLayout...
        </button>
      </div>
      <button aria-label="Keyboard" className="mt-1 mr-[18px] ml-auto">
        <Icon className="size-6">
          <path d="M7 6c4-4 6 3 14-1" stroke="#0c1d44" strokeWidth="2" />
          <rect x="2" y="11" width="24" height="15" rx="2" fill="#d8d8d2" stroke="#111" strokeWidth="2" />
          <path d="M6 16h17M6 20h17" stroke="#222" strokeWidth="2" strokeDasharray="2 1.5" />
        </Icon>
      </button>
      <div className="relative flex h-full w-[134px] items-center border-l-2 border-[#0b3f9c] bg-linear-to-b from-[#3fb2fb] via-[#1290ea] via-20% to-[#1290ea] pl-4 font-['Liberation_Mono',monospace] text-[17px] text-white">
        <button
          aria-label="Show tray"
          className="absolute -left-4 flex size-[30px] items-center justify-center rounded-full border border-[#bfe0ff] bg-[#2a86e2]"
        >
          <Icon className="size-5">
            <path d="M18 5L9 14l9 9" stroke="#fff" strokeWidth="4" />
          </Icon>
        </button>
        <Icon className="size-[30px]">
          <path d="M3 7h14v14H3z" fill="#d9e0d9" stroke="#000" strokeWidth="2" />
          <path d="M17 12l9-5v13l-9-4z" fill="#e8e8e8" stroke="#000" strokeWidth="2" />
          <circle cx="7" cy="6" r="3.5" fill="#fff" stroke="#000" strokeWidth="2" />
          <circle cx="15" cy="6" r="3" fill="#fff" stroke="#000" strokeWidth="2" />
          <path d="M6 13l4 5 5-7" stroke="#1e6e3a" strokeWidth="2" />
        </Icon>
        <span className="ml-[10px] pt-1">22:06</span>
      </div>
    </div>
  );
}

/* ---------- player chrome ---------- */

const windowButtons: [string, ReactNode][] = [
  ["Mini mode", <path d="M4 4h20v20H4zM7 17h2m2 0h2m2 0h2m2 0h2" />],
  ["Pin", <path d="M2 14h8M10 3v22M10 7l4 2h10l-3 5 3 5H14l-4 2" />],
  ["Playlist", <path d="M4 24V4h7l3 4h11v16zM9 12h10" />],
];

const systemButtons: [string, ReactNode][] = [
  ["Menu", <path d="M4 5h20M5 11h18l-9 13z" />],
  ["Minimize", <path d="M4 14h20" />],
  ["Restore", <path d="M4 10h16v14H4zM4 12h16M8 5h17v14" />],
  ["Close", <path d="M4 4l20 20M24 4L4 24" />],
];

function ChromeButton({ label, children }: { label: string; children: ReactNode }) {
  return (
    <button aria-label={label} className="flex h-10 w-[42px] items-center justify-center">
      <svg viewBox="0 0 28 28" className="size-[28px]" fill="none" stroke="#a8a8a8" strokeWidth="1.8" aria-hidden="true">
        {children}
      </svg>
    </button>
  );
}

function PlayerHeader() {
  return (
    <header className="flex h-[51px] shrink-0 items-start bg-[#262626] pl-3">
      <svg viewBox="0 0 40 40" className="mt-[2px] size-10" aria-hidden="true">
        <circle cx="20" cy="20" r="19.5" fill="#686868" />
        <path d="M11 12c5 0 10 2 13 8 2-3 5-4 9-5 4 0 6 2 6 7-1 8-7 15-15 17-3-8 2-18-13-27z" fill="#c3c3c3" />
      </svg>
      <button className="mt-[5px] ml-5 h-[33px] w-[69px] rounded-sm bg-[#4d4d4d] text-lg leading-8 text-white">登录</button>
      <p className="min-w-0 flex-1 text-center text-[19px] leading-[43px] whitespace-nowrap text-[#a0a0a0]">
        12.PCB设计提高b.rmvb
      </p>
      <div className="mr-1 flex items-center">
        <button aria-label="Games" className="mr-[5px]">
          <svg viewBox="0 0 40 30" className="h-[29px] w-10" aria-hidden="true">
            <defs>
              <linearGradient id="pad" x1="0" y1="0" x2="0" y2="1">
                <stop offset="0" stopColor="#ffc11e" />
                <stop offset="1" stopColor="#ff7a0e" />
              </linearGradient>
            </defs>
            <path
              d="M10 1c3 0 3 2 6 2h8c3 0 3-2 6-2 6 0 10 16 9 23-1 6-5 6-8 2-2-3-3-4-6-4H15c-3 0-4 1-6 4-3 4-7 4-8-2C0 17 4 1 10 1z"
              fill="url(#pad)"
            />
            <path d="M13 7l2 4 4 2-4 2-2 4-2-4-4-2 4-2z" fill="#262626" />
            <circle cx="29" cy="9" r="2" fill="#262626" />
            <circle cx="26" cy="15" r="2" fill="#262626" />
          </svg>
        </button>
        {windowButtons.map(([label, art]) => (
          <ChromeButton key={label} label={label}>
            {art}
          </ChromeButton>
        ))}
        <span className="mx-[7px] h-5 w-[2px] bg-[#555]" />
        {systemButtons.map(([label, art]) => (
          <ChromeButton key={label} label={label}>
            {art}
          </ChromeButton>
        ))}
      </div>
    </header>
  );
}

function PlayerFooter() {
  const range =
    "block appearance-none bg-transparent [&::-webkit-slider-runnable-track]:h-[6px] [&::-webkit-slider-thumb]:appearance-none [&::-webkit-slider-thumb]:rounded-full [&::-webkit-slider-thumb]:bg-white [&::-webkit-slider-thumb]:border-[#0a4684]";
  const line = { fill: "none", stroke: "#a8a8a8", strokeWidth: 1.6 };
  return (
    <footer className="h-[120px] shrink-0 bg-black text-[#a3a3a3]">
      <div className="pt-[9px] pl-2">
        <input
          type="range"
          aria-label="Position"
          min={0}
          max={1000}
          defaultValue={396}
          className={`${range} h-6 w-full [&::-webkit-slider-runnable-track]:bg-[linear-gradient(to_right,#3096ff_39.7%,#4a4a4a_39.7%)] [&::-webkit-slider-thumb]:-mt-[9px] [&::-webkit-slider-thumb]:size-6 [&::-webkit-slider-thumb]:border-[5px]`}
        />
      </div>
      <div className="grid grid-cols-[1fr_auto_1fr] items-center pt-[25px]">
        <p className="pl-[27px] font-['Noto_Sans',sans-serif] text-[19px]">00:20:11 /&nbsp; 00:51:02</p>
        <div className="mr-[90px] flex h-[38px] items-center">
          <button aria-label="Stop" className="size-[22px] rounded-xs bg-white" />
          <button aria-label="Previous" className="ml-[50px]">
            <svg viewBox="0 0 22 22" className="size-[22px]" fill="#fff" aria-hidden="true">
              <path d="M0 0h2v22H0zM22 0v22L4 11z" />
            </svg>
          </button>
          <button aria-label="Pause" className="ml-[54px]">
            <svg viewBox="0 0 26 38" className="h-[38px] w-[26px]" fill="#fff" aria-hidden="true">
              <rect x="1" y="1" width="6" height="36" rx="2" />
              <rect x="19" y="1" width="6" height="36" rx="2" />
            </svg>
          </button>
          <button aria-label="Next" className="ml-[54px]">
            <svg viewBox="0 0 22 22" className="size-[22px]" fill="#fff" aria-hidden="true">
              <path d="M20 0h2v22h-2zM0 0l18 11L0 22z" />
            </svg>
          </button>
          <button aria-label="Mute" className="ml-[54px]">
            <svg viewBox="0 0 28 22" className="h-[22px] w-7" fill="none" aria-hidden="true">
              <path d="M0 5h6l8-5v22l-8-5H0z" fill="#fff" />
              <path d="M17 7c2 2 2 6 0 8M21 4c4 4 4 10 0 14" stroke="#fff" strokeWidth="1.8" />
            </svg>
          </button>
          <input
            type="range"
            aria-label="Volume"
            defaultValue={100}
            className={`${range} ml-2 h-4 w-[102px] [&::-webkit-slider-runnable-track]:rounded-full [&::-webkit-slider-runnable-track]:bg-[linear-gradient(to_right,#3096ff_93%,transparent_93%)] [&::-webkit-slider-thumb]:-mt-[5px] [&::-webkit-slider-thumb]:size-4 [&::-webkit-slider-thumb]:border-4`}
          />
        </div>
        <div className="flex items-center justify-end pr-6">
          <button aria-label="Cast to TV">
            <svg viewBox="0 0 28 28" className="size-7" {...line} aria-hidden="true">
              <path d="M9 23H1V2h26v21h-8" />
              <path d="M6 8h7M9 8v8M16 8l3 8 3-8" />
              <path d="M7 27l7-7 7 7z" fill="#a8a8a8" stroke="none" />
            </svg>
          </button>
          <button className="ml-[22px] h-[30px] w-[66px] rounded-full border-2 border-[#6c6c6c] text-lg leading-6">倍速</button>
          <button aria-label="Toolbox" className="relative ml-[22px]">
            <svg viewBox="0 0 28 28" className="size-7" {...line} aria-hidden="true">
              <rect x="1" y="5" width="26" height="21" rx="2" />
              <path d="M9 5V1h10v4M1 14h10M17 14h10M11 11h6v6h-6z" />
            </svg>
            <span className="absolute -top-1 -right-1 size-2 rounded-full bg-[#ff4b4b]" />
          </button>
          <button aria-label="Settings" className="ml-[26px]">
            <svg viewBox="0 0 28 28" className="size-7" {...line} aria-hidden="true">
              <path d="M10 2l4 2 4-2 5 3v4l4 5-4 5v4l-5 3-4-2-4 2-5-3v-4l-4-5 4-5V5z" strokeLinejoin="round" />
              <circle cx="14" cy="14" r="5" />
            </svg>
          </button>
          <button aria-label="Full screen" className="ml-[27px]">
            <svg viewBox="0 0 26 26" className="size-[26px]" {...line} aria-hidden="true">
              <path d="M10 2H2v7M16 24h8v-7M16 2h8v8M24 2l-8 8M10 24H2v-8M2 24l8-8" />
            </svg>
          </button>
        </div>
      </div>
    </footer>
  );
}

export default function App() {
  return (
    <div className="flex h-screen flex-col overflow-hidden bg-black font-['Noto_Sans','Noto_Sans_CJK_SC',sans-serif]">
      <PlayerHeader />
      <main className="relative flex min-h-0 flex-1 justify-center pl-3">
        <section className="flex aspect-[1792/1343] h-full flex-col overflow-hidden bg-[#e9e8d8] font-['Liberation_Sans','Noto_Sans_CJK_SC',sans-serif] text-black">
          <TitleBar />
          <MenuBar />
          <ToolBar />
          <Workspace />
          <StatusBar />
          <TaskBar />
        </section>
        <button
          aria-label="Open playlist"
          className="absolute top-[597px] right-0 flex h-[148px] w-6 items-center justify-end overflow-hidden rounded-l-sm bg-[#121212]"
        >
          <svg viewBox="0 0 12 20" className="h-5 w-3" fill="none" stroke="#777" strokeWidth="1.8" aria-hidden="true">
            <path d="M12 1L2 10l10 9" />
          </svg>
        </button>
      </main>
      <PlayerFooter />
    </div>
  );
}
